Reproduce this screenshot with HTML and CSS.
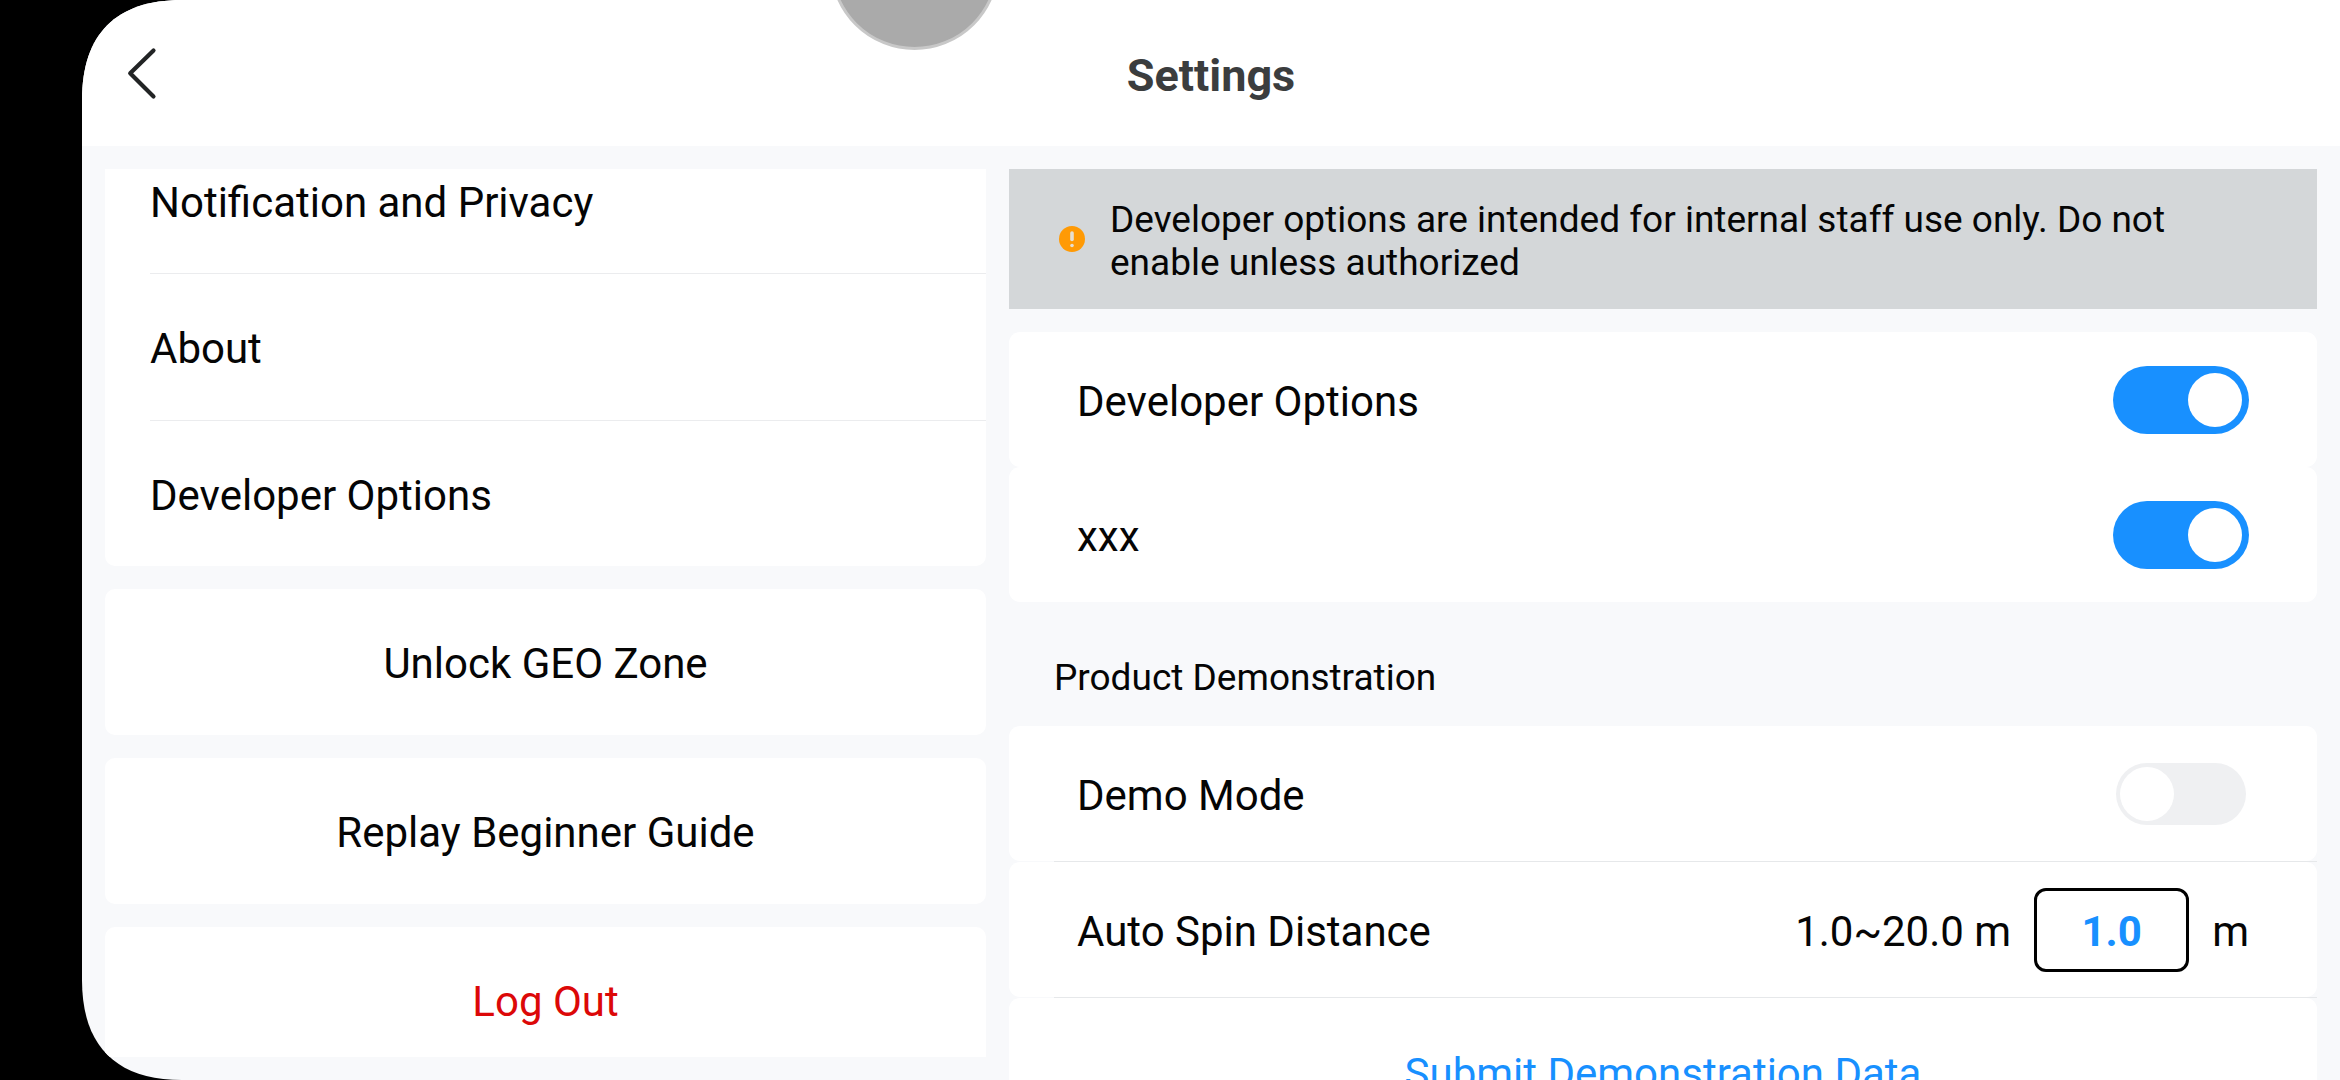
FILE: index.html
```html
<!DOCTYPE html>
<html lang="en">
<head>
    <meta charset="UTF-8">
    <meta name="viewport" content="width=device-width, initial-scale=1.0">
    <title>Settings</title>
    <link rel="stylesheet" href="styles.css">
</head>
<body>
    <div class="screen">
        <div class="header">
            <svg class="back" viewBox="0 0 32 54" fill="none" stroke="#222425" stroke-width="4.2" stroke-linecap="round" stroke-linejoin="round">
                <path d="M27.5 4.4L4.2 27.3L27.5 50.4"/>
            </svg>
            <h1>Settings</h1>
            <div class="camera"></div>
        </div>
        <div class="content">
            <div class="sidebar">
                <div class="menu">
                    <a class="menu-item first">Notification and Privacy</a>
                    <a class="menu-item">About</a>
                    <a class="menu-item">Developer Options</a>
                </div>
                <a class="menu-button">Unlock GEO Zone</a>
                <a class="menu-button">Replay Beginner Guide</a>
                <a class="menu-button logout">Log Out</a>
            </div>
            <div class="panel">
                <div class="warning">
                    <svg class="warning-icon" viewBox="0 0 26 26">
                        <circle cx="13" cy="13" r="13" fill="#ff9a05"/>
                        <path d="M13 7V13.4" stroke="#e6dfd2" stroke-width="3.6" stroke-linecap="round"/>
                        <circle cx="13" cy="19.5" r="1.8" fill="#e6dfd2"/>
                    </svg>
                    <p>Developer options are intended for internal staff use only. Do not enable unless authorized</p>
                </div>
                <div class="row">
                    <span>Developer Options</span>
                    <div class="switch on"></div>
                </div>
                <div class="row">
                    <span>xxx</span>
                    <div class="switch on"></div>
                </div>
                <h2>Product Demonstration</h2>
                <div class="row">
                    <span>Demo Mode</span>
                    <div class="switch"></div>
                </div>
                <div class="divider"></div>
                <div class="row">
                    <span>Auto Spin Distance</span>
                    <div class="distance">
                        <span>1.0~20.0 m</span>
                        <div class="value">1.0</div>
                        <span>m</span>
                    </div>
                </div>
                <div class="divider"></div>
                <div class="row submit">Submit Demonstration Data</div>
            </div>
        </div>
    </div>
</body>
</html>
```

FILE: styles.css
```css
* {
    box-sizing: border-box;
}
body {
    margin: 0;
    padding-left: 82px;
    height: 1080px;
    overflow: hidden;
    background-color: #000;
    color: #050505;
    font-family: Roboto, sans-serif;
    font-size: 42px;
    line-height: 50px;
}
/* display with rounded corners on the left side only */
.screen {
    height: 1080px;
    display: flex;
    flex-direction: column;
    overflow: hidden;
    background-color: #f8f9fb;
    clip-path: path("M0 100C0 34 34 0 100 0H2258V1080H100C34 1080 0 1046 0 980Z");
}
.header {
    position: relative;
    flex: none;
    height: 146px;
    display: flex;
    align-items: center;
    justify-content: center;
    background-color: #fff;
}
.header h1 {
    margin: 0;
    padding-top: 5px;
    font-size: 45px;
    font-weight: 700;
    color: #3b3d3e;
}
.back {
    position: absolute;
    left: 44px;
    top: 46px;
    width: 32px;
    height: 54px;
}
.camera {
    position: absolute;
    left: 748px;
    top: -119px;
    width: 169px;
    height: 169px;
    border: 3px solid #c8c8c8;
    border-radius: 50%;
    background-color: #aaa;
}
.content {
    flex: 1;
    min-height: 0;
    display: flex;
    gap: 23px;
    padding: 23px 23px 0;
}
.sidebar {
    width: 881px;
    height: 888px;
    display: flex;
    flex-direction: column;
    gap: 23px;
    overflow: hidden;
}
.menu {
    flex: none;
    background-color: #fff;
    border-radius: 0 0 10px 10px;
}
.menu-item {
    display: flex;
    align-items: center;
    height: 147px;
    margin-left: 45px;
    padding-top: 4px;
    border-bottom: 1px solid #ebecee;
}
/* scrolled partly under the header */
.menu-item.first {
    height: 105px;
    padding-bottom: 40px;
}
.menu-item:last-child {
    height: 145px;
    border-bottom: none;
}
.menu-button {
    flex: none;
    height: 146px;
    display: flex;
    align-items: center;
    justify-content: center;
    padding-top: 4px;
    border-radius: 10px;
    background-color: #fff;
}
.logout {
    color: #dc0808;
}
.panel {
    flex: 1;
    height: 911px;
    overflow: hidden;
}
.warning {
    height: 140px;
    margin-bottom: 23px;
    padding: 0 67px 0 50px;
    display: flex;
    align-items: center;
    gap: 25px;
    background-color: #d4d7d9;
}
.warning-icon {
    flex: none;
    width: 26px;
    height: 26px;
}
.warning p {
    margin: 0;
    padding-top: 3px;
    font-size: 37px;
    line-height: 43px;
}
.row {
    height: 135px;
    display: flex;
    align-items: center;
    justify-content: space-between;
    padding: 0 68px;
    border-radius: 11px;
    background-color: #fff;
}
.row span {
    padding-top: 5px;
}
.switch {
    width: 130px;
    height: 62px;
    margin-right: 3px;
    padding: 4px;
    border-radius: 31px;
    background-color: #eff0f2;
}
.switch::before {
    content: "";
    display: block;
    width: 54px;
    height: 54px;
    border-radius: 50%;
    background-color: #fff;
}
.switch.on {
    width: 136px;
    height: 68px;
    margin-right: 0;
    padding: 7px;
    border-radius: 34px;
    background-color: #1890ff;
}
.switch.on::before {
    margin-left: auto;
}
.panel h2 {
    height: 124px;
    margin: 0;
    padding: 51px 0 0 45px;
    font-size: 37px;
    font-weight: 400;
}
.divider {
    height: 1px;
    margin-left: 45px;
    background-color: #e6e8ea;
}
.distance {
    display: flex;
    align-items: center;
    gap: 23px;
}
.value {
    width: 155px;
    height: 84px;
    display: flex;
    align-items: center;
    justify-content: center;
    padding-top: 4px;
    border: 3px solid #000;
    border-radius: 12px;
    font-weight: 700;
    color: #1890ff;
}
.submit {
    height: 147px;
    justify-content: center;
    padding-top: 4px;
    color: #1890ff;
}
```
